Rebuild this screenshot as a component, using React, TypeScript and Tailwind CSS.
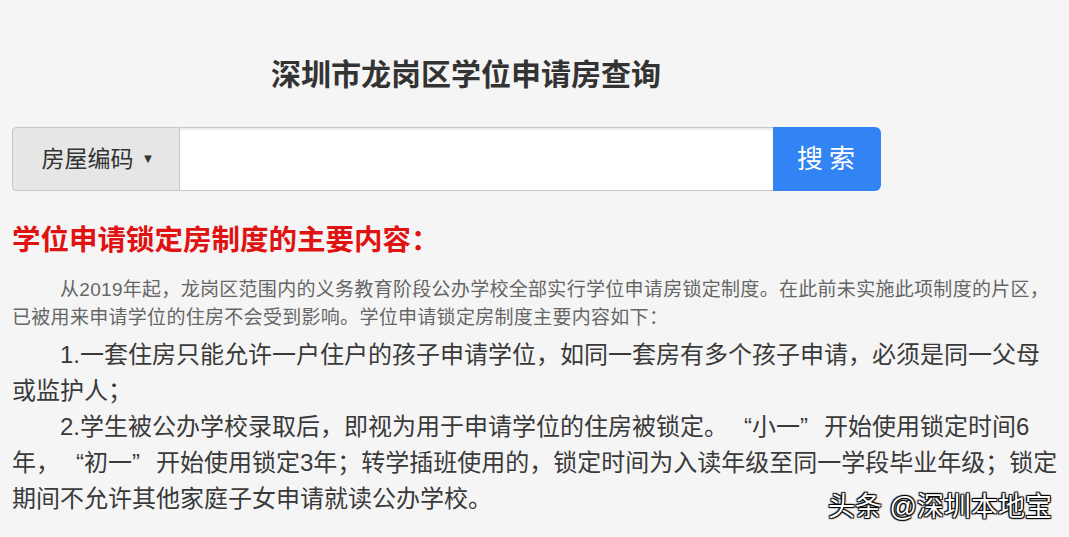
function OpenQuote() {
  return <span className="inline-block w-[24px] indent-0 text-right">“</span>;
}

function CloseQuote() {
  return <span className="inline-block w-[24px] indent-0 text-left">”</span>;
}

export default function App() {
  return (
    <div className="relative min-h-[537px] w-full overflow-hidden bg-[#f5f5f5] pl-3 pr-2 pt-[55px] font-['Liberation_Sans','Noto_Sans_CJK_SC',sans-serif] text-[#333]">
      {/* page title */}
      <h1 className="w-[908px] text-center text-[30px] font-bold leading-[40px] text-[#333]">
        深圳市龙岗区学位申请房查询
      </h1>

      {/* search bar */}
      <div className="mt-8 flex h-16 w-[869px]">
        <button className="flex w-[168px] items-center justify-center gap-2 rounded-l border border-[#c8c8c8] bg-[#e6e6e6] pl-1 text-[23px] text-[#333]">
          房屋编码
          <span className="text-[13px]">▼</span>
        </button>
        <input
          type="text"
          className="flex-1 border-y border-[#c8c8c8] bg-white shadow-[inset_0_2px_2px_rgba(0,0,0,0.08)] outline-none"
        />
        <button className="w-[108px] rounded-r-md bg-[#3283f4] pl-1 text-[26px] tracking-[6px] text-white">
          搜索
        </button>
      </div>

      <h2 className="mt-[29px] text-[28.5px] font-bold leading-[40px] text-[#e01212]">
        学位申请锁定房制度的主要内容：
      </h2>

      <p className="mt-4 indent-[48px] text-[19px] leading-[28px] tracking-[0.3px] text-[#666]">
        从2019年起，龙岗区范围内的义务教育阶段公办学校全部实行学位申请房锁定制度。在此前未实施此项制度的片区，已被用来申请学位的住房不会受到影响。学位申请锁定房制度主要内容如下：
      </p>

      <div className="mt-[5px] text-[24px] leading-[36px] text-[#3a3a3a]">
        <p className="indent-[48px]">
          1.一套住房只能允许一户住户的孩子申请学位，如同一套房有多个孩子申请，必须是同一父母或监护人；
        </p>
        <p className="indent-[48px]">
          2.学生被公办学校录取后，即视为用于申请学位的住房被锁定。<OpenQuote />小一<CloseQuote />开始使用锁定时间6年，<OpenQuote />初一<CloseQuote />开始使用锁定3年；转学插班使用的，锁定时间为入读年级至同一学段毕业年级；锁定期间不允许其他家庭子女申请就读公办学校。
        </p>
      </div>

      {/* watermark */}
      <div className="absolute bottom-[14px] right-[17px] text-[27px] leading-[32px] text-white [text-shadow:0_0_1px_#000,1px_1px_1px_#000,-1px_-1px_1px_#000,1px_-1px_1px_#000,-1px_1px_1px_#000]">
        头条 @深圳本地宝
      </div>
    </div>
  );
}
